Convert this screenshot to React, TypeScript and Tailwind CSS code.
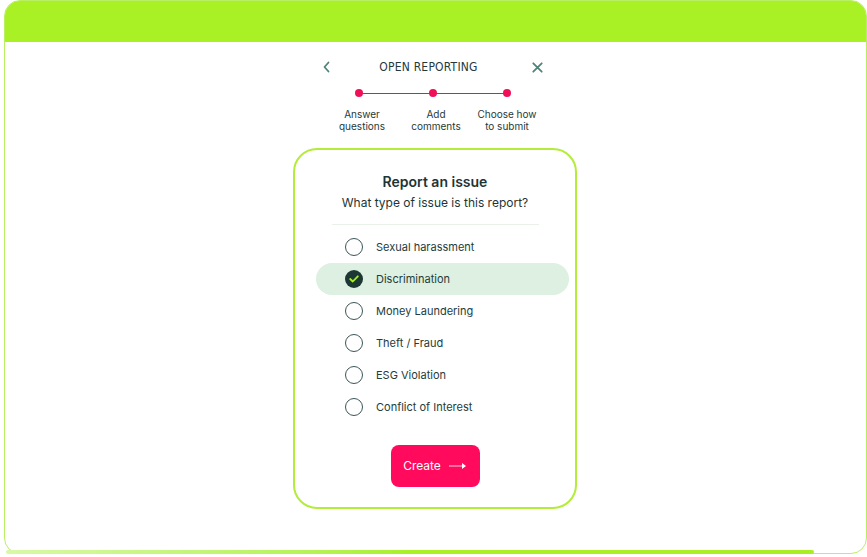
import React from "react";

const options = [
  "Sexual harassment",
  "Discrimination",
  "Money Laundering",
  "Theft / Fraud",
  "ESG Violation",
  "Conflict of Interest",
];

export default function App() {
  return (
    <div className="w-[867px] h-[557px] bg-white relative" style={{ fontFamily: "Inter, 'Noto Sans', sans-serif" }}>
      <div className="absolute left-[4px] top-0 w-[863px] h-[554px] rounded-[16px] border border-[#b9ef62] overflow-hidden flex flex-col">
        <div className="h-[41px] bg-[#a9f025] shrink-0" />
        <div className="flex-1 flex flex-col items-start">
          {/* header */}
          <div className="mt-[17px] ml-[317px] w-[221px] flex items-center justify-between text-[#4f8578]">
            <svg width="9" height="12" viewBox="0 0 9 12">
              <path d="M6.5 1.5 L2.5 6 L6.5 10.5" fill="none" stroke="currentColor" strokeWidth="1.8" strokeLinecap="round" strokeLinejoin="round" />
            </svg>
            <span className="text-[12px] leading-[16px] tracking-[0.2px] text-[#1f3a3a] mr-[6px]" style={{ fontFamily: "'DejaVu Sans Condensed', 'DejaVu Sans', sans-serif" }}>OPEN REPORTING</span>
            <svg width="11" height="11" viewBox="0 0 11 11">
              <path d="M1.3 1.3 L9.7 9.7 M9.7 1.3 L1.3 9.7" stroke="currentColor" strokeWidth="1.8" strokeLinecap="round" />
            </svg>
          </div>
          {/* stepper */}
          <div className="mt-[14px] ml-[350px] relative w-[156px] h-[8px]">
            <div className="absolute left-[4px] right-[4px] top-[3.5px] h-px bg-[#f0105a]" />
            <div className="absolute left-0 top-0 w-[8px] h-[8px] rounded-full bg-[#f0105a]" />
            <div className="absolute left-[74px] top-0 w-[8px] h-[8px] rounded-full bg-[#f0105a]" />
            <div className="absolute left-[148px] top-0 w-[8px] h-[8px] rounded-full bg-[#f0105a]" />
          </div>
          <div className="mt-[11px] ml-[320px] flex text-[10px] leading-[12px] text-[#1f3a3a] text-center">
            <div className="w-[74px]">Answer<br />questions</div>
            <div className="w-[74px]">Add<br />comments</div>
            <div className="w-[68px]">Choose how<br />to submit</div>
          </div>
          {/* card */}
          <div className="mt-[16px] ml-[288px] w-[284px] h-[361px] rounded-[24px] border-2 border-[#b3ec3a] flex flex-col items-center">
            <div className="mt-[23px] text-[14px] font-semibold text-[#1d3535] leading-[18px]">Report an issue</div>
            <div className="mt-[4px] text-[12px] text-[#1d3535] leading-[16px]">What type of issue is this report?</div>
            <div className="mt-[13px] w-[207px] h-px bg-[#e9f1e9]" />
            <div className="mt-[6px] self-start ml-[21px] w-[253px] flex flex-col">
              {options.map((o, i) => {
                const sel = i === 1;
                return (
                  <div key={o} className={`h-[32px] flex items-center pl-[29px] rounded-full ${sel ? "bg-[#ddf0e1]" : ""}`}>
                    {sel ? (
                      <div className="w-[18px] h-[18px] rounded-full bg-[#1d3737] flex items-center justify-center">
                        <svg width="10" height="8" viewBox="0 0 10 8">
                          <path d="M1.2 4 L3.8 6.5 L8.8 1.3" fill="none" stroke="#a9f025" strokeWidth="1.8" strokeLinecap="round" strokeLinejoin="round" />
                        </svg>
                      </div>
                    ) : (
                      <div className="w-[18px] h-[18px] rounded-full border border-[#3e5656]" />
                    )}
                    <span className="ml-[13px] text-[11px] text-[#243c3c]">{o}</span>
                  </div>
                );
              })}
            </div>
            <button className="mt-[22px] w-[89px] h-[42px] rounded-[8px] bg-[#ff0a5c] flex items-center justify-center gap-[8px] text-white text-[12px]">
              <span>Create</span>
              <svg width="18" height="8" viewBox="0 0 18 8">
                <path d="M0 4 H15" stroke="white" strokeWidth="1" opacity="0.8" />
                <path d="M13 1 L17 4 L13 7 Z" fill="white" />
              </svg>
            </button>
          </div>
        </div>
      </div>
      <div className="absolute left-[6px] top-[550px] w-[808px] h-[4px] rounded-full bg-gradient-to-r from-[#d9f8a6] via-[#a9f025] to-[#a9ee22]" />
    </div>
  );
}
